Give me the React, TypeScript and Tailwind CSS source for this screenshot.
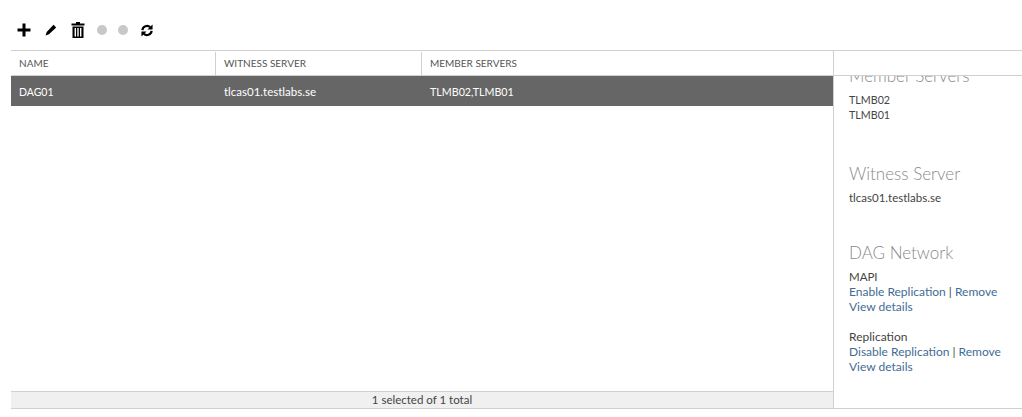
const font = { fontFamily: 'Lato, sans-serif' };

function PlusIcon() {
  return (
    <svg width="14" height="14" viewBox="0 0 14 14" fill="#000">
      <path d="M5.5 0.5 H8.5 V5.5 H13.5 V8.5 H8.5 V13.5 H5.5 V8.5 H0.5 V5.5 H5.5 Z" />
    </svg>
  );
}

function PencilIcon() {
  return (
    <svg width="12" height="12" viewBox="0 0 12 12" fill="#000">
      <path d="M8.5 0.8 L11.2 3.5 L4 10.3 L0.6 11.4 L1.7 8 Z" />
    </svg>
  );
}

function TrashIcon() {
  return (
    <svg width="14" height="16" viewBox="0 0 14 16" fill="#000">
      <path d="M5 0 H9 V1.5 H13.5 V3.5 H0.5 V1.5 H5 Z" />
      <path fillRule="evenodd" d="M1.5 4.5 H12.5 V16 H1.5 Z M3.6 6 V14.5 H5 V6 Z M6.3 6 V14.5 H7.7 V6 Z M9 6 V14.5 H10.4 V6 Z" />
    </svg>
  );
}

function RefreshIcon() {
  return (
    <svg width="12" height="13" viewBox="0 0 13 13" fill="none" stroke="#000" strokeWidth="2.4">
      <path d="M1.5 6 A5 5 0 0 1 10 3" />
      <path d="M11.5 7 A5 5 0 0 1 3 10" />
      <path d="M12.5 0 V5.5 H7 Z" fill="#000" strokeWidth="0" />
      <path d="M0.5 13 V7.5 H6 Z" fill="#000" strokeWidth="0" />
    </svg>
  );
}

function Toolbar() {
  return (
    <div className="flex h-[50px] items-center pl-[17px] pt-[10px]">
      <PlusIcon />
      <div className="w-[14px]" />
      <PencilIcon />
      <div className="w-[14px]" />
      <TrashIcon />
      <div className="w-[12px]" />
      <div className="w-[10px] h-[10px] rounded-full bg-[#c8c8c8]" />
      <div className="w-[11px]" />
      <div className="w-[10px] h-[10px] rounded-full bg-[#c8c8c8]" />
      <div className="w-[13px]" />
      <RefreshIcon />
    </div>
  );
}

function Table() {
  return (
    <div className="flex flex-col w-[823px] border-r border-[#d0d0d0]">
      <div className="flex h-[25px] pt-[1px] border-b border-[#d0d0d0] text-[10px] text-[#555555]">
        <div className="w-[205px] pl-[8px] flex items-center border-r border-[#d0d0d0]">NAME</div>
        <div className="w-[206px] pl-[8px] flex items-center border-r border-[#d0d0d0]">WITNESS SERVER</div>
        <div className="pl-[8px] flex items-center">MEMBER SERVERS</div>
      </div>
      <div className="flex h-[30px] pt-[7px] items-baseline bg-[#666666] text-white">
        <div className="w-[205px] pl-[8px] text-[10.5px]">DAG01</div>
        <div className="w-[206px] pl-[8px] text-[11.5px]">tlcas01.testlabs.se</div>
        <div className="pl-[8px] text-[10.7px]">TLMB02,TLMB01</div>
      </div>
      <div className="flex-1" />
      <div className="h-[17px] flex items-center justify-center bg-[#f0f0f0] border-t border-[#d0d0d0] text-[11.5px] text-[#444444]">
        1 selected of 1 total
      </div>
    </div>
  );
}

function Heading({ children }: { children: string }) {
  return <div className="text-[17px] leading-[24px] text-[#8a8a8a] font-light">{children}</div>;
}

function Link({ children }: { children: string }) {
  return <span className="text-[#3f6c94]">{children}</span>;
}

function Details() {
  return (
    <div className="flex-1 flex flex-col">
      <div className="h-[25px] border-b border-[#d0d0d0]" />
      <div className="flex-1 overflow-hidden pl-[15px] text-[12px] leading-[15px] text-[#444444]">
        <div className="mt-[-12px]">
          <Heading>Member Servers</Heading>
          <div className="mt-[4px] text-[10.7px]">TLMB02</div>
          <div className="text-[10.7px]">TLMB01</div>
          <div className="mt-[40px]"><Heading>Witness Server</Heading></div>
          <div className="mt-[4px] text-[11.5px]">tlcas01.testlabs.se</div>
          <div className="mt-[36px]"><Heading>DAG Network</Heading></div>
          <div className="mt-[4px] text-[11.5px]">MAPI</div>
          <div><Link>Enable Replication</Link> | <Link>Remove</Link></div>
          <div><Link>View details</Link></div>
          <div className="mt-[15px]">Replication</div>
          <div><Link>Disable Replication</Link> | <Link>Remove</Link></div>
          <div><Link>View details</Link></div>
        </div>
      </div>
    </div>
  );
}

export default function App() {
  return (
    <div className="w-[1022px] h-[417px] bg-white" style={font}>
      <Toolbar />
      <div className="ml-[11px] flex h-[359px] border-y border-[#d0d0d0]">
        <Table />
        <Details />
      </div>
    </div>
  );
}
